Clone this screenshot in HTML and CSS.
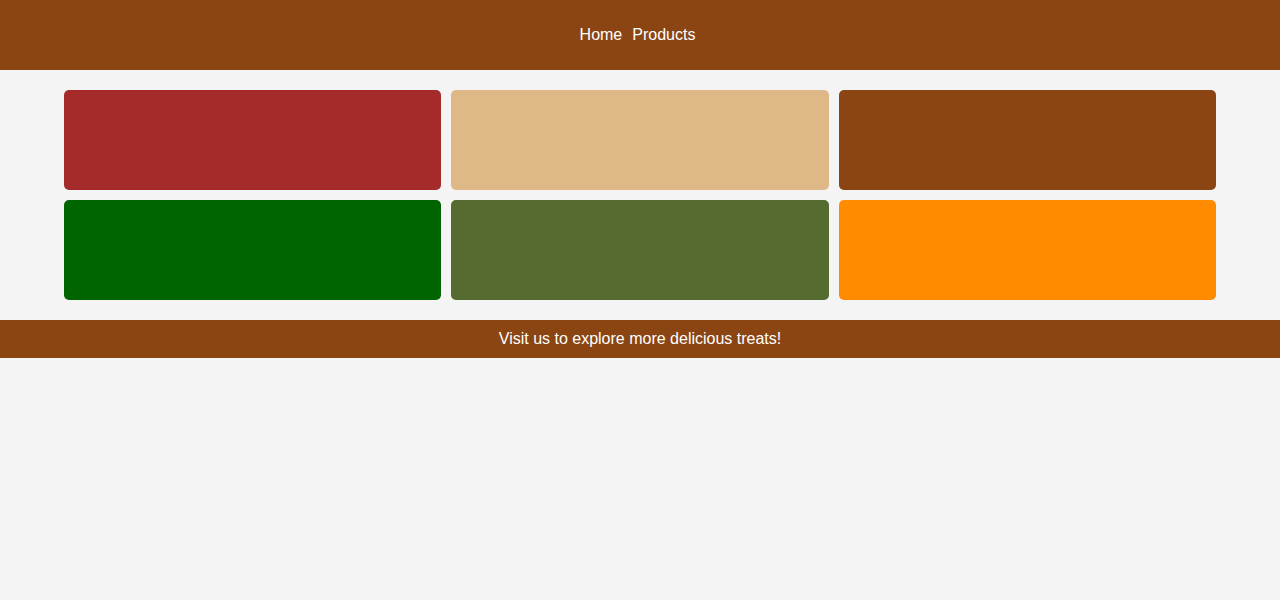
FILE: index.html
```html
<!DOCTYPE html>
<html>
<head>
<meta charset="utf-8">
<link rel="stylesheet" href="styles.css">
</head>
<body>
<header class="site-header">
  <nav class="nav">
    <a class="nav-link" href="#">Home</a>
    <a class="nav-link" href="#">Products</a>
  </nav>
</header>
<main class="main">
  <div class="grid">
    <div class="card card-red"></div>
    <div class="card card-tan"></div>
    <div class="card card-brown"></div>
    <div class="card card-green"></div>
    <div class="card card-olive"></div>
    <div class="card card-orange"></div>
  </div>
</main>
<footer class="site-footer">Visit us to explore more delicious treats!</footer>
</body>
</html>
```
FILE: styles.css
```css
html, body {
  margin: 0;
  padding: 0;
}
body {
  background: #f4f4f4;
  font-family: "Liberation Sans", Arial, sans-serif;
  font-size: 16px;
  line-height: 18px;
  color: #333;
}
.site-header {
  background: #8b4513;
  height: 70px;
  display: flex;
  align-items: center;
  justify-content: center;
  padding-right: 5px;
}
.nav {
  display: flex;
  gap: 10px;
}
.nav-link {
  color: #fff;
  text-decoration: none;
}
.main {
  padding: 20px 0;
}
.grid {
  width: 90%;
  margin: 0 auto;
  display: grid;
  grid-template-columns: repeat(3, 1fr);
  gap: 10px;
}
.card {
  height: 100px;
  border-radius: 5px;
}
.card-red { background: #a52a2a; }
.card-tan { background: #deb887; }
.card-brown { background: #8b4513; }
.card-green { background: #006400; }
.card-olive { background: #556b2f; }
.card-orange { background: #ff8c00; }
.site-footer {
  background: #8b4513;
  color: #fff;
  text-align: center;
  padding: 10px 0;
}
```
